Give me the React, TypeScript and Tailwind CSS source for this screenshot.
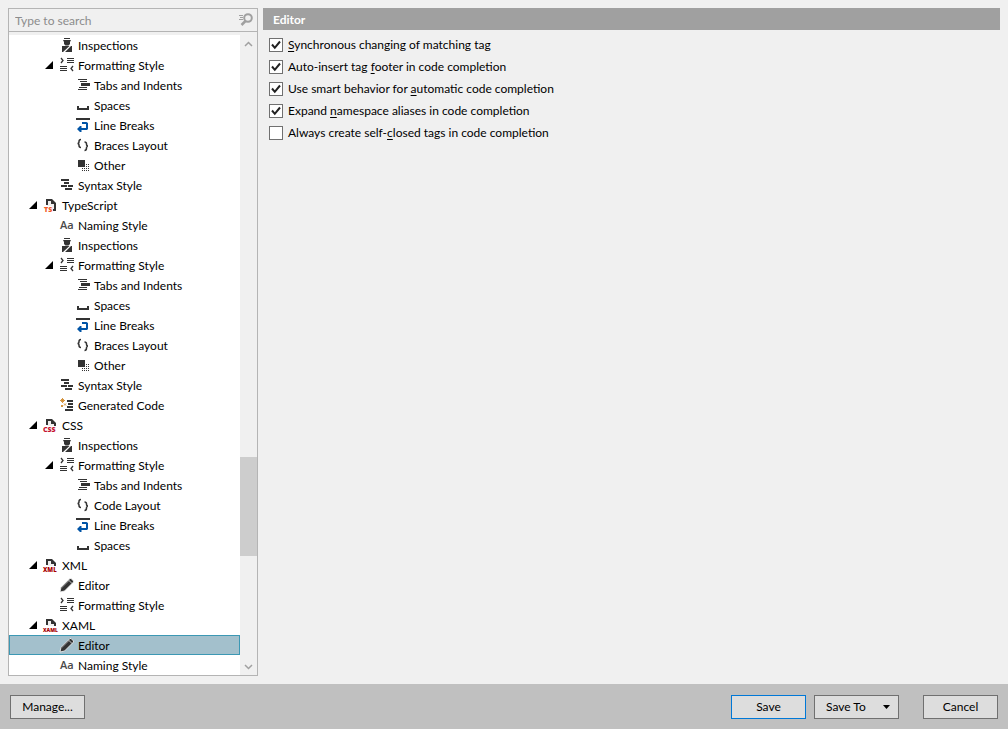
import React from "react";

const ink = "#333333";

function FileIcon({ label, color }: { label: string; color: string }) {
  const wide = label.length > 2;
  const size = label.length > 3 ? "5" : label === "XML" ? "6" : "7";
  return (
    <svg width="16" height="16" viewBox="0 0 16 16" className="overflow-visible" aria-hidden="true">
      <path d="M4 3H9L12 6V13H4Z" fill="#f0f0f0" />
      <path d="M3 2H9L13 6V14H10V12H11V7H8V4H5V8H3Z" fill={ink} />
      <path d={wide ? "M0 9H15V16H0Z" : "M0 9H9V16H0Z"} fill="#ffffff" />
      <text x={wide ? "0" : "1"} y="15" fill={color} fontSize={size} fontWeight="800" fontFamily="Open Sans, sans-serif">
        {label}
      </text>
    </svg>
  );
}

function Icon({ name }: { name: string }) {
  switch (name) {
    case "ts":
      return <FileIcon label="TS" color="#f05a28" />;
    case "css":
      return <FileIcon label="CSS" color="#c4122f" />;
    case "xml":
      return <FileIcon label="XML" color="#a80000" />;
    case "xaml":
      return <FileIcon label="XAML" color="#a80000" />;
    case "naming":
      return (
        <svg width="16" height="16" viewBox="0 0 16 16" aria-hidden="true">
          <text x="1" y="12" fontSize="11" fontWeight="600" fill="#4a4a4a" fontFamily="Open Sans, sans-serif">
            Aa
          </text>
        </svg>
      );
    case "inspect":
      return (
        <svg width="16" height="16" viewBox="0 0 16 16" fill={ink} aria-hidden="true">
          <path d="M5 1H11V2H5ZM4 3H12L11 5H5ZM5 5H11V7L9.500 8.500H6.500L5 7Z" />
          <path d="M3 9H10.500L4 15H3ZM12 9H13V15H6Z" />
        </svg>
      );
    case "format":
      return (
        <svg width="16" height="16" viewBox="0 0 16 16" fill={ink} aria-hidden="true">
          <path d="M8 1H15V2H8ZM8 3H15V4H8ZM8 5H15V6H8ZM1 9H8V10H1ZM1 11H8V12H1ZM1 13H8V14H1Z" />
          <path d="M2 1L4 3.500L2 6M14 9L12 11.500L14 14" fill="none" stroke={ink} strokeWidth="1.300" />
        </svg>
      );
    case "tabs":
      return (
        <svg width="16" height="16" viewBox="0 0 16 16" fill={ink} aria-hidden="true">
          <path d="M3 2H12V3H3ZM5 4H12V5H5ZM6 6H15V9H6ZM4 10H12V11H4ZM3 12H12V13H3Z" />
        </svg>
      );
    case "spaces":
      return (
        <svg width="16" height="16" viewBox="0 0 16 16" fill={ink} aria-hidden="true">
          <path d="M2 9H4V11H12V9H14V13H2Z" />
        </svg>
      );
    case "breaks":
      return (
        <svg width="16" height="16" viewBox="0 0 16 16" aria-hidden="true">
          <path d="M1 1H15V3H1Z" fill={ink} />
          <path d="M7 5H11.500L13 6V12L12 13H6.500V15H5L2 12L5 9H6.500V11H11V7H7Z" fill="#0054a6" />
        </svg>
      );
    case "braces":
      return (
        <svg width="16" height="16" viewBox="0 0 16 16" fill="none" stroke={ink} strokeWidth="1.500" aria-hidden="true">
          <path d="M6 2.500Q4 2.500 4 4.500Q4 6.500 2.500 6.500Q4 6.500 4 8.500Q4 10.500 6 10.500M9.500 5Q11.500 5 11.500 7Q11.500 9 13 9Q11.500 9 11.500 11Q11.500 13.500 9.500 13.500" />
        </svg>
      );
    case "other":
      return (
        <svg width="16" height="16" viewBox="0 0 16 16" fill={ink} aria-hidden="true">
          <path d="M3 3H10V10H3Z" />
          <path
            d="M11.500 7V15M13.500 7V15M7.500 11V15M9.500 11V15"
            stroke={ink}
            strokeWidth="1"
            strokeDasharray="1 1"
          />
        </svg>
      );
    case "syntax":
      return (
        <svg width="16" height="16" viewBox="0 0 16 16" fill={ink} aria-hidden="true">
          <path d="M2 2H10V4H2ZM5 5H10V7H5ZM2 8H8V10H2ZM9 8H14V10H9ZM6 11H13V13H6Z" />
        </svg>
      );
    case "generated":
      return (
        <svg width="16" height="16" viewBox="0 0 16 16" aria-hidden="true">
          <path d="M8 3H14V5H8ZM9 6H14V8H9ZM8 9H14V11H8ZM6 12H14V14H6Z" fill={ink} />
          <path d="M3.500 1V3M3.500 4V6M1 3.500H3M4 3.500H6M2 2L5 5M5 2L2 5" stroke="#d08a2e" strokeWidth="0.900" />
          <path d="M5 6.500L7 8.500M7 6.500L5 8.500M2 8L4 10M4 8L2 10" stroke="#d08a2e" strokeWidth="0.900" />
        </svg>
      );
    default:
      return (
        <svg width="16" height="16" viewBox="0 0 16 16" aria-hidden="true">
          <path d="M1 15L2 10.500L11 1.500H12L14.500 4V5L5.500 14Z" fill={ink} stroke="#f4f4f4" strokeWidth="0.800" />
          <path d="M9.500 3L13 6.500" stroke="#eeeeee" strokeWidth="0.800" />
          <path d="M3 10.500L10 3.800" stroke="#888888" strokeWidth="0.800" />
        </svg>
      );
  }
}

type Row = { level: 0 | 1 | 2; icon: string; label: string; open?: boolean; selected?: boolean };

const rows: Row[] = [
  { level: 1, icon: "inspect", label: "Inspections" },
  { level: 1, icon: "format", label: "Formatting Style", open: true },
  { level: 2, icon: "tabs", label: "Tabs and Indents" },
  { level: 2, icon: "spaces", label: "Spaces" },
  { level: 2, icon: "breaks", label: "Line Breaks" },
  { level: 2, icon: "braces", label: "Braces Layout" },
  { level: 2, icon: "other", label: "Other" },
  { level: 1, icon: "syntax", label: "Syntax Style" },
  { level: 0, icon: "ts", label: "TypeScript", open: true },
  { level: 1, icon: "naming", label: "Naming Style" },
  { level: 1, icon: "inspect", label: "Inspections" },
  { level: 1, icon: "format", label: "Formatting Style", open: true },
  { level: 2, icon: "tabs", label: "Tabs and Indents" },
  { level: 2, icon: "spaces", label: "Spaces" },
  { level: 2, icon: "breaks", label: "Line Breaks" },
  { level: 2, icon: "braces", label: "Braces Layout" },
  { level: 2, icon: "other", label: "Other" },
  { level: 1, icon: "syntax", label: "Syntax Style" },
  { level: 1, icon: "generated", label: "Generated Code" },
  { level: 0, icon: "css", label: "CSS", open: true },
  { level: 1, icon: "inspect", label: "Inspections" },
  { level: 1, icon: "format", label: "Formatting Style", open: true },
  { level: 2, icon: "tabs", label: "Tabs and Indents" },
  { level: 2, icon: "braces", label: "Code Layout" },
  { level: 2, icon: "breaks", label: "Line Breaks" },
  { level: 2, icon: "spaces", label: "Spaces" },
  { level: 0, icon: "xml", label: "XML", open: true },
  { level: 1, icon: "pencil", label: "Editor" },
  { level: 1, icon: "format", label: "Formatting Style" },
  { level: 0, icon: "xaml", label: "XAML", open: true },
  { level: 1, icon: "pencil", label: "Editor", selected: true },
  { level: 1, icon: "naming", label: "Naming Style" },
];

const indents = ["pl-5", "pl-9", "pl-13"];

function TreeRow({ row }: { row: Row }) {
  return (
    <li
      role="treeitem"
      aria-level={row.level + 1}
      aria-expanded={row.open}
      aria-selected={!!row.selected}
      className={`flex h-5 shrink-0 items-center ${indents[row.level]} ${
        row.selected ? "bg-[#a3c0cc] outline outline-1 -outline-offset-1 outline-[#3c98b4]" : ""
      }`}
    >
      <span className="flex w-[14px] shrink-0">
        {row.open && (
          <svg width="9" height="8" viewBox="0 0 9 8" aria-hidden="true">
            <path d="M8 0V8H0Z" fill="#000000" />
          </svg>
        )}
      </span>
      <Icon name={row.icon} />
      <span className="ml-[3px] pt-0.5 whitespace-nowrap">{row.label}</span>
    </li>
  );
}

const options: { before: string; key: string; after: string; checked: boolean }[] = [
  { before: "", key: "S", after: "ynchronous changing of matching tag", checked: true },
  { before: "Auto-insert tag ", key: "f", after: "ooter in code completion", checked: true },
  { before: "Use smart behavior for ", key: "a", after: "utomatic code completion", checked: true },
  { before: "Expand ", key: "n", after: "amespace aliases in code completion", checked: true },
  { before: "Always create self-", key: "c", after: "losed tags in code completion", checked: false },
];

function Option({ option, id }: { option: (typeof options)[number]; id: string }) {
  return (
    <div className="flex h-[22px] items-center gap-[5px]">
      <span className="grid size-[14px] shrink-0">
        <input
          id={id}
          type="checkbox"
          defaultChecked={option.checked}
          className="peer col-start-1 row-start-1 size-[14px] appearance-none border border-[#707070] bg-white"
        />
        <svg
          width="14"
          height="14"
          viewBox="0 0 14 14"
          aria-hidden="true"
          className="pointer-events-none invisible col-start-1 row-start-1 peer-checked:visible"
        >
          <path d="M3 6.500L5.800 9.800L11 3.500" fill="none" stroke="#212121" strokeWidth="2" />
        </svg>
      </span>
      <label htmlFor={id} className="whitespace-pre">
        {option.before}
        <span className="underline underline-offset-2">{option.key}</span>
        {option.after}
      </label>
    </div>
  );
}

const button = "flex h-6 items-center border bg-[#dddddd]";

export default function App() {
  return (
    <div className="flex min-h-screen flex-col bg-[#f0f0f0] font-['Lato','Open_Sans',sans-serif] text-[12px] leading-4 text-black">
      <div className="flex flex-1 gap-[5px] p-2">
        <aside className="flex w-[250px] shrink-0 flex-col border border-[#b4b4b4]">
          <div className="flex h-[23px] items-center border-b border-[#b4b4b4] pr-[3px] pl-[6px]">
            <input
              type="text"
              aria-label="Search"
              placeholder="Type to search"
              className="min-w-0 flex-1 bg-transparent pt-0.5 outline-none placeholder:text-[#8c8c8c]"
            />
            <svg width="16" height="16" viewBox="0 0 16 16" fill="none" stroke="#a0a0a0" aria-hidden="true">
              <circle cx="10" cy="6" r="3.800" strokeWidth="2" />
              <path d="M7.500 9L3.500 13" strokeWidth="2.500" />
              <path d="M1 3.500H5M2 5.500H5M1 7.500H5" strokeWidth="1" />
            </svg>
          </div>
          <div className="flex flex-1 pt-[3px]">
            <ul role="tree" aria-label="Settings" className="flex min-w-0 flex-1 flex-col bg-white">
              {rows.map((row, i) => (
                <TreeRow key={i} row={row} />
              ))}
            </ul>
            <div className="flex w-[17px] shrink-0 flex-col">
              <button type="button" aria-label="Scroll up" className="flex h-[17px] items-center justify-center">
                <svg width="9" height="6" viewBox="0 0 9 6" aria-hidden="true">
                  <path d="M1 5L4.500 1.500L8 5" fill="none" stroke="#a0a0a0" strokeWidth="1.500" />
                </svg>
              </button>
              <div className="grow-[405]" />
              <div className="grow-[99] bg-[#cdcdcd]" />
              <div className="grow-[102]" />
              <button type="button" aria-label="Scroll down" className="flex h-[17px] items-center justify-center">
                <svg width="9" height="6" viewBox="0 0 9 6" aria-hidden="true">
                  <path d="M1 1L4.500 4.500L8 1" fill="none" stroke="#a0a0a0" strokeWidth="1.500" />
                </svg>
              </button>
            </div>
          </div>
        </aside>
        <main className="min-w-0 flex-1">
          <h1 className="flex h-[22px] items-center bg-[#a0a0a0] pl-[10px] pt-0.5 font-bold text-white">Editor</h1>
          <div className="flex flex-col pt-1 pl-[6px]">
            {options.map((option, i) => (
              <Option key={i} option={option} id={`option-${i}`} />
            ))}
          </div>
        </main>
      </div>
      <footer className="flex h-[45px] shrink-0 items-center justify-between bg-[#c0c0c0] px-[10px]">
        <button type="button" className={`${button} w-[75px] justify-center border-[#707070]`}>
          Manage...
        </button>
        <div className="flex">
          <button type="button" className={`${button} w-[75px] justify-center border-[#0078d7]`}>
            Save
          </button>
          <button type="button" className={`${button} ml-2 w-[85px] justify-between border-[#707070] pr-2 pl-[11px]`}>
            Save To
            <svg width="7" height="4" viewBox="0 0 7 4" aria-hidden="true">
              <path d="M0 0H7L3.500 4Z" fill="#000000" />
            </svg>
          </button>
          <button type="button" className={`${button} ml-6 w-[75px] justify-center border-[#707070]`}>
            Cancel
          </button>
        </div>
      </footer>
    </div>
  );
}
